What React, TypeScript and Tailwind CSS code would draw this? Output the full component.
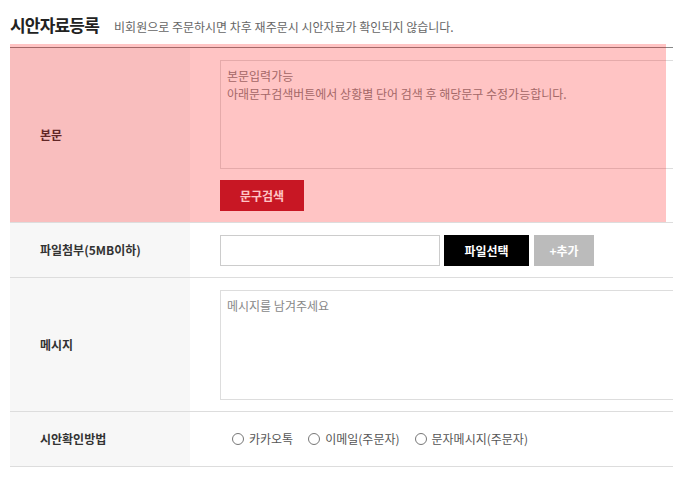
import React from "react";

const font = { fontFamily: '"Noto Sans CJK KR", "Noto Sans", sans-serif' };

function Label({ children }: { children: React.ReactNode }) {
  return (
    <div className="w-[180px] shrink-0 bg-[#f7f7f7] flex items-center pl-[30px] text-[12px] font-bold text-[#333]">
      {children}
    </div>
  );
}

function Radio({ label }: { label: string }) {
  return (
    <label className="flex items-center gap-[5px] text-[12px] text-[#555]">
      <span className="w-[12px] h-[12px] rounded-full border border-[#777] bg-white" />
      {label}
    </label>
  );
}

export default function App() {
  return (
    <div className="w-[673px] h-[480px] overflow-hidden bg-white" style={font}>
      <div className="relative px-[10px] w-[760px]">
        {/* Title */}
        <div className="flex items-baseline h-[47px] pt-[12px]">
          <h2 className="text-[17px] font-bold text-[#222] tracking-[-0.8px]">시안자료등록</h2>
          <p className="ml-[15px] text-[12px] text-[#666]">
            비회원으로 주문하시면 차후 재주문시 시안자료가 확인되지 않습니다.
          </p>
        </div>

        <div className="border-t border-[#888]">
          {/* 본문 */}
          <div className="flex border-b border-[#ddd]">
            <Label>본문</Label>
            <div className="pl-[30px] pt-[12px] pb-[11px]">
              <textarea
                className="block w-[470px] h-[109px] border border-[#ddd] px-[6px] py-[6px] text-[12px] leading-[18px] text-[#333] placeholder:text-[#888] resize-none outline-none"
                placeholder={"본문입력가능\n아래문구검색버튼에서 상황별 단어 검색 후 해당문구 수정가능합니다."}
              />
              <button className="mt-[11px] w-[84px] h-[31px] bg-[#b81f30] text-white text-[12px] font-bold">
                문구검색
              </button>
            </div>
          </div>

          {/* 파일첨부 */}
          <div className="flex border-b border-[#ddd]">
            <Label>파일첨부(5MB이하)</Label>
            <div className="pl-[30px] pt-[12px] pb-[11px] flex">
              <input className="w-[220px] h-[31px] border border-[#ccc] outline-none" />
              <button className="ml-[4px] w-[85px] h-[31px] bg-black text-white text-[12px] font-bold">
                파일선택
              </button>
              <button className="ml-[5px] w-[60px] h-[31px] bg-[#bbb] text-white text-[12px] font-bold">
                +추가
              </button>
            </div>
          </div>

          {/* 메시지 */}
          <div className="flex border-b border-[#ddd]">
            <Label>메시지</Label>
            <div className="pl-[30px] pt-[12px] pb-[11px]">
              <textarea
                className="block w-[470px] h-[110px] border border-[#ddd] px-[6px] py-[6px] text-[12px] leading-[18px] text-[#333] placeholder:text-[#888] resize-none outline-none"
                placeholder="메시지를 남겨주세요"
              />
            </div>
          </div>

          {/* 시안확인방법 */}
          <div className="flex border-b border-[#ddd] h-[55px]">
            <Label>시안확인방법</Label>
            <div className="pl-[42px] flex items-center gap-[15px]">
              <Radio label="카카오톡" />
              <Radio label="이메일(주문자)" />
              <Radio label="문자메시지(주문자)" />
            </div>
          </div>
        </div>

        {/* highlight overlay */}
        <div className="absolute left-[10px] top-[44px] w-[656px] h-[178px] bg-[rgba(255,0,0,0.23)] pointer-events-none" />
      </div>
    </div>
  );
}
